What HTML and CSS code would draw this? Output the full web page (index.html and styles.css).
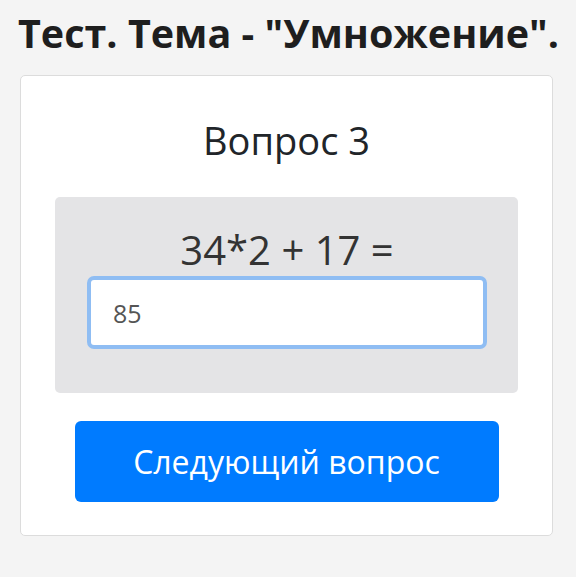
FILE: index.html
```html
<!DOCTYPE html>
<html lang="ru">
<head>
<meta charset="utf-8">
<title>Тест</title>
<link rel="stylesheet" href="styles.css">
</head>
<body>
<h1 class="page-title">Тест. Тема - "Умножение".</h1>
<div class="card">
  <h2 class="question-title">Вопрос 3</h2>
  <div class="question-box">
    <div class="expr">34*2 + 17 =</div>
    <input class="answer" type="text" value="85">
  </div>
  <button class="btn-next" type="button">Следующий вопрос</button>
</div>
</body>
</html>
```
FILE: styles.css
```css
html, body {
  margin: 0;
  background: #f4f4f4;
}
body {
  font-family: "Open Sans", "Noto Sans", sans-serif;
  padding: 0 23px 0 20px;
  color: #212529;
}
.page-title {
  margin: 10px 0 19px -2px;
  font-size: 39.5px;
  font-weight: 700;
  line-height: 46px;
  color: #1e1e1e;
  white-space: nowrap;
}
.card {
  background: #fff;
  border: 1px solid #dcdcdc;
  border-radius: 5px;
  padding: 39px 34px 33px;
}
.question-title {
  margin: 0 0 32px;
  text-align: center;
  font-size: 38px;
  font-weight: 400;
  line-height: 50px;
  color: #212529;
}
.question-box {
  background: #e4e4e6;
  border-radius: 5px;
  padding: 31px 31px 44px 32px;
  text-align: center;
}
.expr {
  font-size: 40px;
  line-height: 44px;
  color: #333;
  margin-bottom: 4px;
}
.answer {
  display: block;
  box-sizing: border-box;
  width: 100%;
  height: 73px;
  margin: 0;
  border: 4px solid #8fbdf3;
  border-radius: 7px;
  padding: 0 22px;
  font-family: inherit;
  font-size: 25px;
  color: #555;
  background: #fff;
  outline: none;
}
.btn-next {
  display: block;
  width: 424px;
  height: 81px;
  margin: 28px auto 0;
  background: #007bff;
  color: #fff;
  border: 0;
  border-radius: 6px;
  font-family: inherit;
  font-size: 32px;
}
```
